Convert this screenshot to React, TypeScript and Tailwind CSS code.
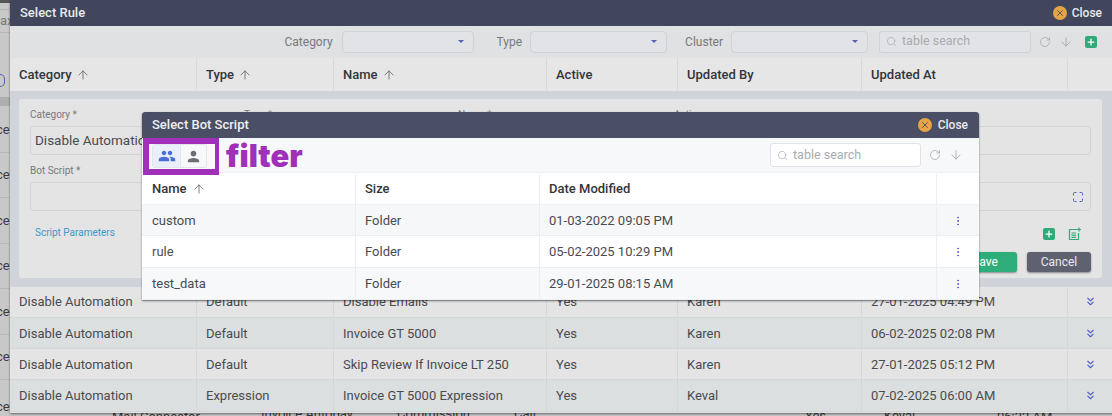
import React from "react";
import { ArrowUp, ArrowDown, RotateCw, Search, ChevronsDown, EllipsisVertical, X, Plus, Maximize } from "lucide-react";
import { MdPeople, MdPerson } from "react-icons/md";

const font = { fontFamily: "Roboto, 'Liberation Sans', sans-serif" };

function CloseBtn({ gap }: { gap: string }) {
  return (
    <div className={`flex items-center ${gap} text-[12px] font-medium text-[#e8e9ec]`}>
      <span className="flex h-[14px] w-[14px] items-center justify-center rounded-full bg-[#e5a445]">
        <X size={10} strokeWidth={2} className="text-[#41465c]" />
      </span>
      Close
    </div>
  );
}

function SearchBox({ cls }: { cls: string }) {
  return (
    <div className={`flex items-center gap-[5px] rounded-[3px] border px-[6px] text-[12.5px] text-[#a9abb0] ${cls}`}>
      <Search size={11} strokeWidth={1.5} className="text-[#a9abb0]" />
      table search
    </div>
  );
}

function Select({ w }: { w: string }) {
  return (
    <div className={`flex h-[22px] items-center justify-end rounded-[4px] border border-[#cfd2d6] bg-[#e1e3e6] pr-[9px] ${w}`}>
      <span className="h-0 w-0 border-x-[3px] border-t-[3px] border-x-transparent border-t-[#5560b8]" />
    </div>
  );
}

const outerCols = "grid-cols-[187px_137px_213px_131px_184px_206px_45px]";
const outerRows = [
  ["Disable Automation", "Default", "Disable Emails", "Yes", "Karen", "27-01-2025 04:49 PM"],
  ["Disable Automation", "Default", "Invoice GT 5000", "Yes", "Karen", "06-02-2025 02:08 PM"],
  ["Disable Automation", "Default", "Skip Review If Invoice LT 250", "Yes", "Karen", "27-01-2025 05:12 PM"],
  ["Disable Automation", "Expression", "Invoice GT 5000 Expression", "Yes", "Keval", "07-02-2025 06:00 AM"],
];
const rowMeta = [
  { h: "h-[31px] pb-[1px]", bg: "bg-[#e4e4e4]" },
  { h: "h-[31px] pt-[1px]", bg: "bg-[#dcdfe0]" },
  { h: "h-[31px] pt-[1px]", bg: "bg-[#e4e4e4]" },
  { h: "h-[32px]", bg: "bg-[#dcdfe0]" },
];
const innerRows = [
  ["custom", "Folder", "01-03-2022 09:05 PM", "h-[31px] pt-[1px] bg-[#f6f7f9]"],
  ["rule", "Folder", "05-02-2025 10:29 PM", "h-[32px] bg-white"],
  ["test_data", "Folder", "29-01-2025 08:15 AM", "h-[32px] bg-[#f7f8fa]"],
];
const innerCols = "grid-cols-[214px_184px_397px_42px]";

function FormField({ label, value, icon }: { label: string; value?: string; icon?: boolean }) {
  return (
    <div className="flex flex-col">
      <div className="h-[18px] text-[10px] leading-[14px] text-[#77797e]">{label}</div>
      <div className="flex h-[29px] items-center justify-between overflow-hidden whitespace-nowrap rounded-[3px] border border-[#d2d3d5] px-[4px] text-[13.5px] text-[#4a4b50]">
        {value}
        {icon && <Maximize size={12} className="ml-auto mr-[2px] text-[#5560b8]" />}
      </div>
    </div>
  );
}

export default function App() {
  const bgRows = ["h-[46px]", "h-[45px]", "h-[46px]", "h-[45px]", "h-[46px]", "h-[45px]"];
  return (
    <div style={font} className="relative h-[416px] w-[1112px] overflow-hidden bg-[#c8c8c8]">
      {/* page behind the dialogs */}
      <div className="flex h-full w-full flex-col text-[13px] text-[#3a3a3a]">
        <div className="h-[3px] bg-[#555555]" />
        <div className="h-[7px] border-b border-[#b5b5b5]" />
        <div className="flex h-[23px] items-center border-b border-[#b5b5b5] text-[#777]">ax</div>
        <div className="flex h-[64px] items-start pt-[41px]">
          <span className="h-[13px] w-[5px] rounded-r-full border-[1.5px] border-l-0 border-[#5560b8]" />
        </div>
        <div className="h-[9px] bg-[#aeaeae]" />
        <div className="h-[1px]" />
        {bgRows.map((h, i) => (
          <div key={i} className={`flex ${h} items-center border-b border-[#b9b9b9]`}>
            <span className="ml-[-4px] whitespace-nowrap">ce</span>
          </div>
        ))}
        <div className="relative grid h-[36px] grid-cols-[112px_149px_136px_117px_291px_79px_113px_1fr] items-end whitespace-nowrap leading-[15px]">
          <span className="ml-[-4px] mb-[2px]">ce</span>
          <span className="mb-[-8px]">Mail Connector</span>
          <span className="mb-[-5px]">Invoice Autopay</span>
          <span className="mb-[-5px]">Commission</span>
          <span className="mb-[-5px]">Call</span>
          <span className="mb-[-7px]">Yes</span>
          <span className="mb-[-7px]">Keval</span>
          <span className="mb-[-8px]">06:22 AM</span>
        </div>
      </div>

      {/* Select Rule dialog */}
      <div className="absolute left-[10px] top-0 flex h-[413px] w-[1103px] flex-col bg-[#dfe1e3] shadow-[0_1px_2px_rgba(0,0,0,0.5)]">
        <div className="flex h-[26px] shrink-0 items-center justify-between bg-[#41465c] pl-[10px] pr-[11px] text-[13px] font-medium text-[#e8e9ec]">
          Select Rule
          <CloseBtn gap="gap-[5px]" />
        </div>
        <div className="flex h-[32px] shrink-0 items-center justify-end pb-[1px] pr-[16px] text-[12px] text-[#77797e]">
          <span className="mr-[9px]">Category</span>
          <Select w="w-[132px]" />
          <span className="ml-[23px] mr-[8px]">Type</span>
          <Select w="w-[137px]" />
          <span className="ml-[18px] mr-[8px]">Cluster</span>
          <Select w="w-[137px]" />
          <SearchBox cls="ml-[11px] h-[22px] w-[152px] border-[#cfd2d6] bg-[#e1e3e6]" />
          <RotateCw size={12} strokeWidth={1.5} className="ml-[8px] text-[#a5a7ab]" />
          <ArrowDown size={14} strokeWidth={1.5} className="ml-[8px] text-[#a5a7ab]" />
          <span className="ml-[12px] flex h-[12px] w-[12px] items-center justify-center rounded-[2px] bg-[#2faa78]">
            <Plus size={10} strokeWidth={3} className="text-white" />
          </span>
        </div>
        <div className={`grid h-[33px] shrink-0 ${outerCols} bg-[#e6e6e6] text-[13px] font-medium text-[#33353b]`}>
          {["Category", "Type", "Name", "Active", "Updated By", "Updated At", ""].map((t, i) => (
            <div key={i} className="flex items-center gap-[4px] border-r border-[#d9d9db] pl-[9px]">
              {t}
              {i < 3 && <ArrowUp size={14} strokeWidth={1.5} className="text-[#6a6c72]" />}
            </div>
          ))}
        </div>
        <div className="h-[196px] shrink-0 bg-[#d0d4da] px-[9px] pt-[8px]">
          <div className="flex h-[179px] w-[1083px] flex-col rounded-[3px] bg-[#e4e4e4] px-[11px] pt-[9px]">
            <div className="grid grid-cols-[209px_209px_211px_1fr] gap-x-[5px]">
              <FormField label="Category *" value="Disable Automation" />
              <FormField label="Type *" />
              <FormField label="Name *" />
              <FormField label="Active" />
            </div>
            <div className="mt-[9px]">
              <FormField label="Bot Script *" icon />
            </div>
            <div className="mt-[14px] flex h-[14px] items-center justify-between pl-[5px] pr-[9px] text-[10px] text-[#3f97c9]">
              Script Parameters
              <span className="mt-[4px] flex items-center gap-[13px]">
                <span className="flex h-[12px] w-[12px] items-center justify-center rounded-[2px] bg-[#2faa78]">
                  <Plus size={10} strokeWidth={3} className="text-white" />
                </span>
                <svg width="14" height="14" viewBox="0 0 14 14" fill="none" stroke="#2faa78" strokeWidth="1.2">
                  <path d="M9 2.5H1.5V12.5H10.5V6" />
                  <path d="M3.5 6H8M3.5 8.2H8M3.5 10.3H8" />
                  <path d="M11 0.5V4.5M9 2.5H13" />
                </svg>
              </span>
            </div>
            <div className="mt-[13px] flex justify-end gap-[10px] text-[12px] text-white">
              <span className="flex h-[20px] w-[64px] items-center justify-center rounded-[3px] bg-[#2fae7c] shadow-[0_1px_2px_rgba(0,0,0,0.4)]">Save</span>
              <span className="flex h-[20px] w-[64px] items-center justify-center rounded-[3px] bg-[#5f6070] text-[#e8e9ec] shadow-[0_1px_2px_rgba(0,0,0,0.4)]">Cancel</span>
            </div>
          </div>
        </div>
        {outerRows.map((r, i) => (
          <div key={i} className={`grid ${rowMeta[i].h} shrink-0 ${outerCols} ${rowMeta[i].bg} border-b border-[#d5d6d8] text-[13px] text-[#4a4b50]`}>
            {r.map((c, j) => (
              <div key={j} className="flex items-center whitespace-nowrap border-r border-[#d5d6d8] pl-[9px]">{c}</div>
            ))}
            <div className="flex items-center justify-center">
              <ChevronsDown size={13} className="text-[#4f5bc4]" />
            </div>
          </div>
        ))}
      </div>

      {/* Select Bot Script dialog */}
      <div className="absolute left-[142px] top-[112px] flex h-[188px] w-[837px] flex-col overflow-hidden rounded-t-[3px] bg-white shadow-[0_1px_2px_rgba(0,0,0,0.55)]">
        <div className="flex h-[26px] shrink-0 items-center justify-between bg-[#4a4f66] pl-[10px] pr-[11px] text-[13px] font-medium text-[#eeeff1]">
          Select Bot Script
          <CloseBtn gap="gap-[6px]" />
        </div>
        <div className="relative z-10 flex h-[34px] shrink-0 items-center bg-[#f7f8fa] pr-[16px]">
          <div className="ml-[1px] flex h-[37px] w-[76px] shrink-0 self-start border-y-[6px] border-l-[6px] border-r-[4px] border-[#a02fb9] bg-[#f7f8fa] pl-[3px]">
            <div className="flex h-[24px] w-[55px] rounded-[3px] border border-[#e3e5ea]">
              <span className="flex w-[28px] items-center justify-center border-r border-[#e3e5ea] bg-[#eaeefa]">
                <MdPeople size={18} className="text-[#4a6fd4]" />
              </span>
              <span className="flex flex-1 items-center justify-center">
                <MdPerson size={17} className="text-[#6c6e76]" />
              </span>
            </div>
          </div>
          <span style={{ fontFamily: "Inter, sans-serif" }} className="ml-[7px] text-[31px] font-black leading-none text-[#a02fb9]">filter</span>
          <div className="ml-auto flex items-center">
            <SearchBox cls="h-[24px] w-[151px] border-[#dfe2e8] bg-white" />
            <RotateCw size={12} strokeWidth={1.5} className="ml-[8px] text-[#a5a7ab]" />
            <ArrowDown size={14} strokeWidth={1.5} className="ml-[8px] text-[#a5a7ab]" />
          </div>
        </div>
        <div className={`grid h-[33px] shrink-0 ${innerCols} border-y border-[#eef0f3] bg-white pt-[1px] text-[13px] font-medium text-[#33353b]`}>
          {["Name", "Size", "Date Modified", ""].map((t, i) => (
            <div key={i} className={`flex items-center gap-[5px] ${i === 0 ? "pl-[10px]" : "pl-[9px]"} ${i < 3 ? "border-r border-[#eceef2]" : ""}`}>
              {t}
              {i === 0 && <ArrowUp size={14} strokeWidth={1.5} className="text-[#6a6c72]" />}
            </div>
          ))}
        </div>
        {innerRows.map((r, i) => (
          <div key={i} className={`grid shrink-0 ${innerCols} ${r[3]} border-b border-[#eceef2] text-[13px] text-[#4a4b50]`}>
            {r.slice(0, 3).map((c, j) => (
              <div key={j} className={`flex items-center border-r border-[#eceef2] ${j === 0 ? "pl-[10px]" : "pl-[9px]"}`}>{c}</div>
            ))}
            <div className="flex items-center justify-center">
              <EllipsisVertical size={12} className="text-[#5560b8]" />
            </div>
          </div>
        ))}
      </div>
    </div>
  );
}
